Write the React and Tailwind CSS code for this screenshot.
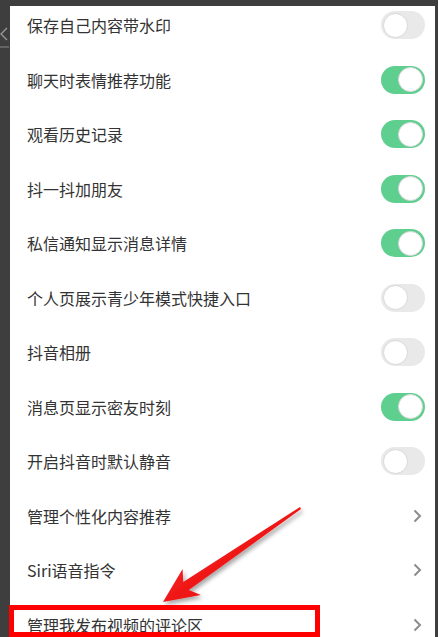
const rows = [
  { label: "保存自己内容带水印", type: "toggle", on: false },
  { label: "聊天时表情推荐功能", type: "toggle", on: true },
  { label: "观看历史记录", type: "toggle", on: true },
  { label: "抖一抖加朋友", type: "toggle", on: true },
  { label: "私信通知显示消息详情", type: "toggle", on: true },
  { label: "个人页展示青少年模式快捷入口", type: "toggle", on: false },
  { label: "抖音相册", type: "toggle", on: false },
  { label: "消息页显示密友时刻", type: "toggle", on: true },
  { label: "开启抖音时默认静音", type: "toggle", on: false },
  { label: "管理个性化内容推荐", type: "link" },
  { label: "Siri语音指令", type: "link" },
  { label: "管理我发布视频的评论区", type: "link" },
];

function Toggle({ on }) {
  return (
    <div
      className={
        on
          ? "w-[44px] h-[28px] rounded-full bg-[#5fcf8f] flex items-center justify-end px-[2px]"
          : "w-[44px] h-[28px] rounded-full bg-[#e9e9e9] flex items-center justify-start px-[2px]"
      }
    >
      <div className="w-[25px] h-[25px] rounded-full bg-white border border-[#d8d8d8]" />
    </div>
  );
}

function Chevron() {
  return (
    <svg width="9" height="14" viewBox="0 0 9 14" className="mr-[3px]">
      <polyline points="1.5,1.5 7,7 1.5,12.5" fill="none" stroke="#8c8c8c" strokeWidth="2" />
    </svg>
  );
}

export default function App() {
  return (
    <div
      className="relative w-[438px] h-[637px] bg-[#3e3e3e] flex pt-[6px] pl-[10px] pr-[3px] overflow-hidden"
      style={{ fontFamily: '"Noto Sans CJK SC", "Noto Sans", sans-serif' }}
    >
      {/* left edge: bits of the page behind */}
      <svg className="absolute left-0 top-[27px]" width="9" height="22" viewBox="0 0 9 22">
        <polyline points="7,1 1,7 7,13" fill="none" stroke="#9a9a9a" strokeWidth="1.3" />
        <line x1="0" y1="20" x2="9" y2="20" stroke="#8a8a8a" strokeWidth="1" />
      </svg>

      {/* settings panel */}
      <div className="flex-1 bg-white overflow-hidden">
        <div className="-mt-[8px] flex flex-col">
          {rows.map((r) => (
            <div key={r.label} className="h-[54.5px] shrink-0 flex items-center justify-between pl-[17px] pr-[10px]">
              <span className="text-[16px] leading-none text-[#333333]">{r.label}</span>
              {r.type === "toggle" ? <Toggle on={r.on} /> : <Chevron />}
            </div>
          ))}
        </div>
      </div>

      {/* annotation: arrow */}
      <svg className="absolute left-0 top-0 pointer-events-none" width="438" height="637" viewBox="0 0 438 637">
        <defs>
          <filter id="sh" x="-20%" y="-20%" width="140%" height="140%">
            <feDropShadow dx="2" dy="3" stdDeviation="2" floodColor="#000" floodOpacity="0.35" />
          </filter>
          <linearGradient id="rg" x1="0" y1="0" x2="1" y2="1">
            <stop offset="0" stopColor="#ff2a2a" />
            <stop offset="1" stopColor="#e00808" />
          </linearGradient>
        </defs>
        <polygon
          points="300,507 183.2,581.9 182.6,568.9 163,602 200.8,595.1 188.8,590.1 301,509"
          fill="url(#rg)"
          filter="url(#sh)"
        />
      </svg>

      {/* annotation: highlight box */}
      <div className="absolute left-[9px] top-[605px] w-[311px] h-[32px] border-[5px] border-[#ff0000]" />
    </div>
  );
}
